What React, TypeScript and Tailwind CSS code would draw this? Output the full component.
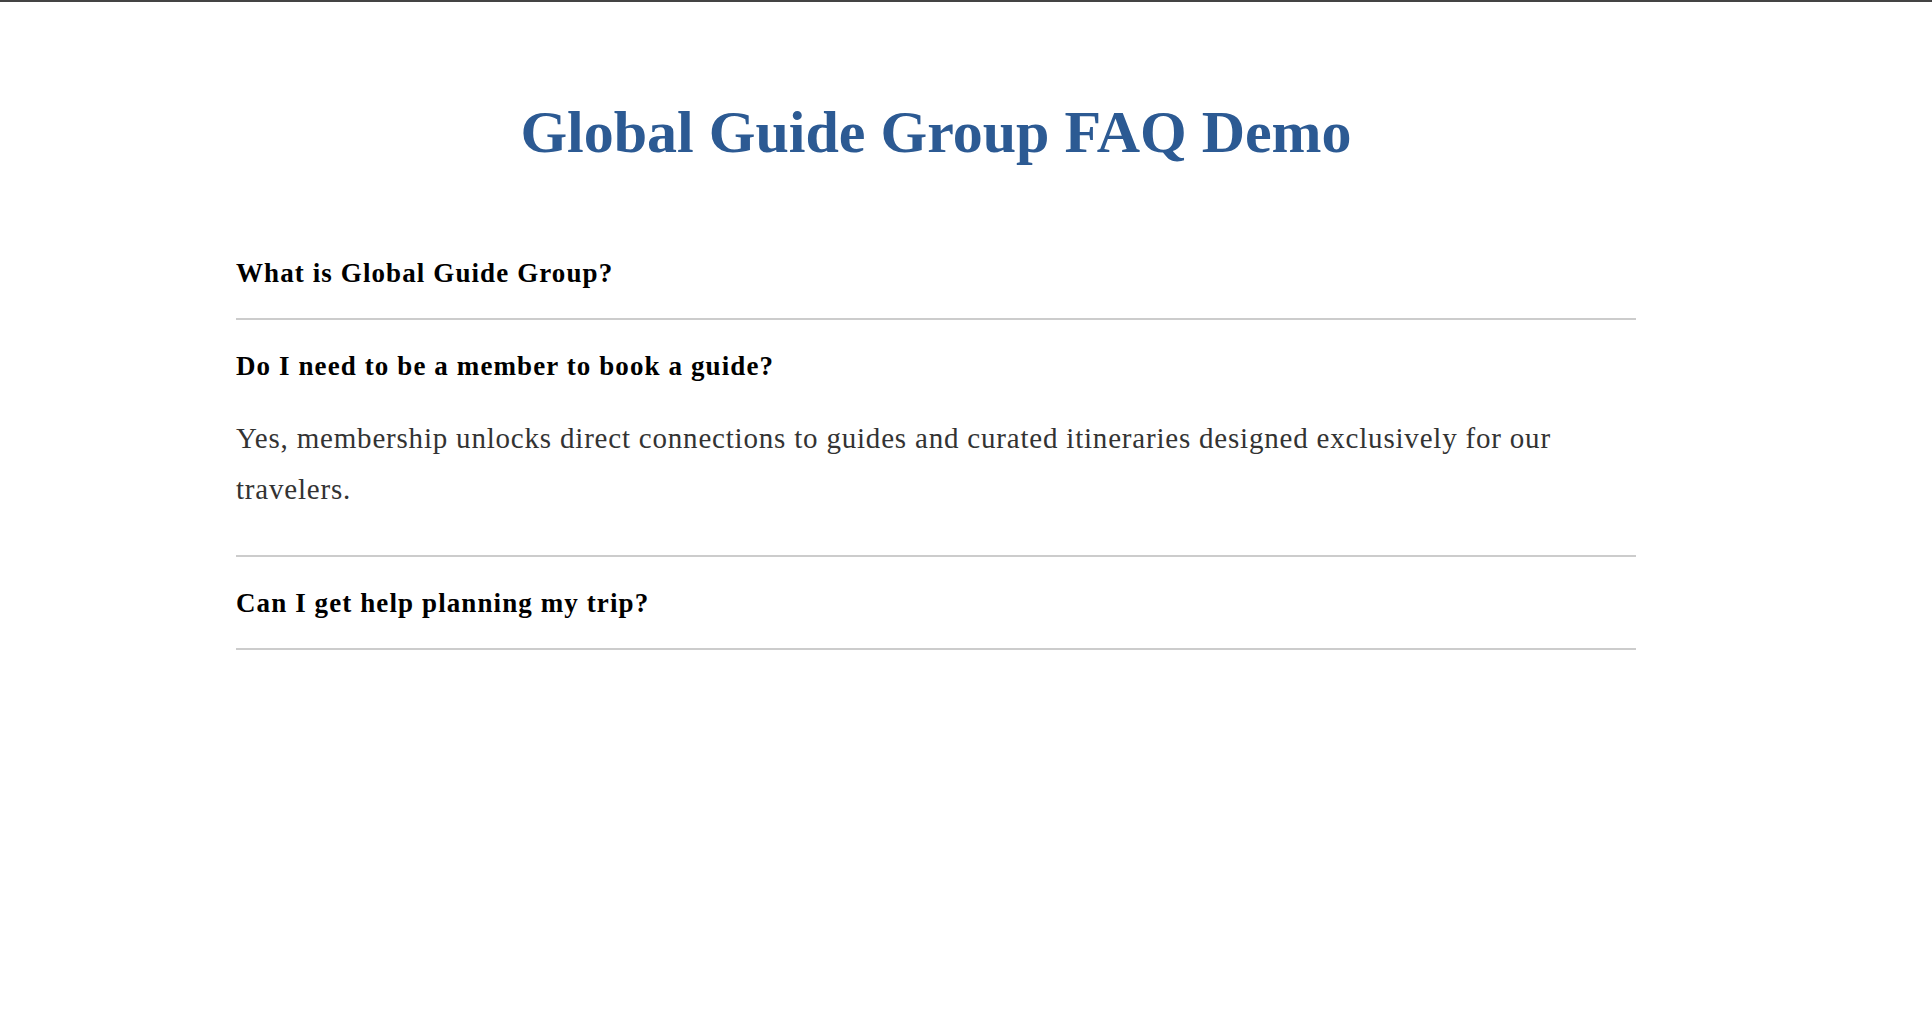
import React, { useState } from "react";

const faqs = [
  {
    q: "What is Global Guide Group?",
    a: "Global Guide Group connects travelers with trusted local guides around the world.",
  },
  {
    q: "Do I need to be a member to book a guide?",
    a: "Yes, membership unlocks direct connections to guides and curated itineraries designed exclusively for our travelers.",
  },
  {
    q: "Can I get help planning my trip?",
    a: "Absolutely. Our team can help you plan every step of your journey.",
  },
];

export default function App() {
  const [open, setOpen] = useState<number | null>(1);
  return (
    <div className="min-h-screen bg-white border-t-2 border-[#444444]" style={{ fontFamily: '"Liberation Serif", serif' }}>
      <div className="ml-[236px] w-[1400px] pt-[94px]">
        <h1 className="text-center text-[60px] leading-[72px] font-bold text-[#2c5a93]">
          Global Guide Group FAQ Demo
        </h1>
        <div className="mt-[59px]">
          {faqs.map((f, i) => (
            <div key={i} className="border-b-2 border-[#cccccc]">
              <button
                className="block w-full text-left pt-[29px] pb-[28px] text-[27px] leading-[34px] font-bold tracking-[1.1px] text-black cursor-pointer"
                onClick={() => setOpen(open === i ? null : i)}
              >
                {f.q}
              </button>
              {open === i && (
                <p className="pt-[2px] pb-[40px] text-[29px] leading-[51px] tracking-[0.8px] text-[#333333]">{f.a}</p>
              )}
            </div>
          ))}
        </div>
      </div>
    </div>
  );
}
